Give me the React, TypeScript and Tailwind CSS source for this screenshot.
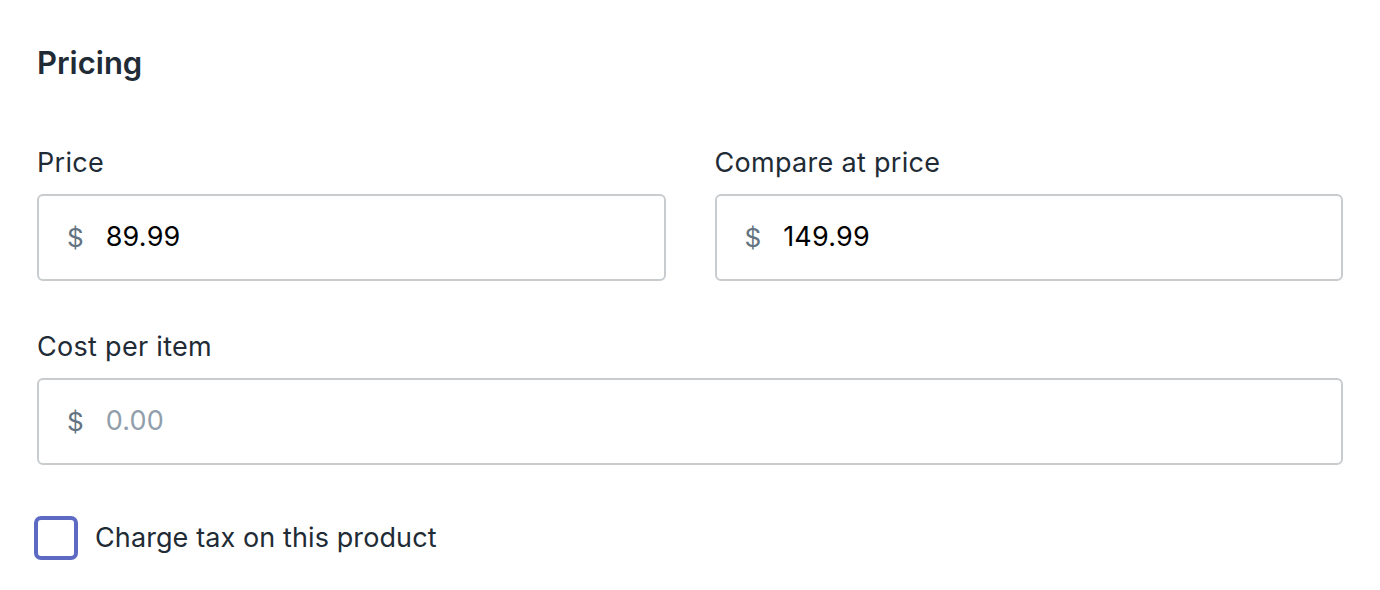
import React from "react";

function MoneyInput({ value, placeholder }: { value?: string; placeholder?: string }) {
  return (
    <div className="flex h-[87px] items-center rounded-[6px] border-2 border-[#c9cccf] bg-white pl-[28px] pr-4">
      <span className="text-[26px] text-[#637381]">$</span>
      {value ? (
        <span className="ml-[22px] text-[27px] tracking-[0.2px] text-black">{value}</span>
      ) : (
        <span className="ml-[22px] text-[27px] tracking-[0.2px] text-[#919eab]">{placeholder}</span>
      )}
    </div>
  );
}

function Label({ children }: { children: React.ReactNode }) {
  return <div className="mb-[15px] text-[27px] leading-[32px] tracking-[0.3px] text-[#212b36]">{children}</div>;
}

export default function App() {
  return (
    <div
      className="min-h-[590px] w-[1380px] bg-white px-[37px] pt-[45px]"
      style={{ fontFamily: "Inter, 'Noto Sans', sans-serif" }}
    >
      <h2 className="text-[31px] font-semibold leading-[36px] text-[#212b36]">Pricing</h2>
      <div className="mt-[66px] grid grid-cols-2 gap-x-[49px]">
        <div>
          <Label>Price</Label>
          <MoneyInput value="89.99" />
        </div>
        <div>
          <Label>Compare at price</Label>
          <MoneyInput value="149.99" />
        </div>
      </div>
      <div className="mt-[50px]">
        <Label>Cost per item</Label>
        <MoneyInput placeholder="0.00" />
      </div>
      <div className="mt-[51px] flex items-center">
        <div className="-ml-[3px] h-[44px] w-[44px] rounded-[7px] border-[4px] border-[#5c6ac4] bg-white" />
        <span className="ml-[17px] text-[27px] leading-[32px] tracking-[0.1px] text-[#212b36]">Charge tax on this product</span>
      </div>
    </div>
  );
}
